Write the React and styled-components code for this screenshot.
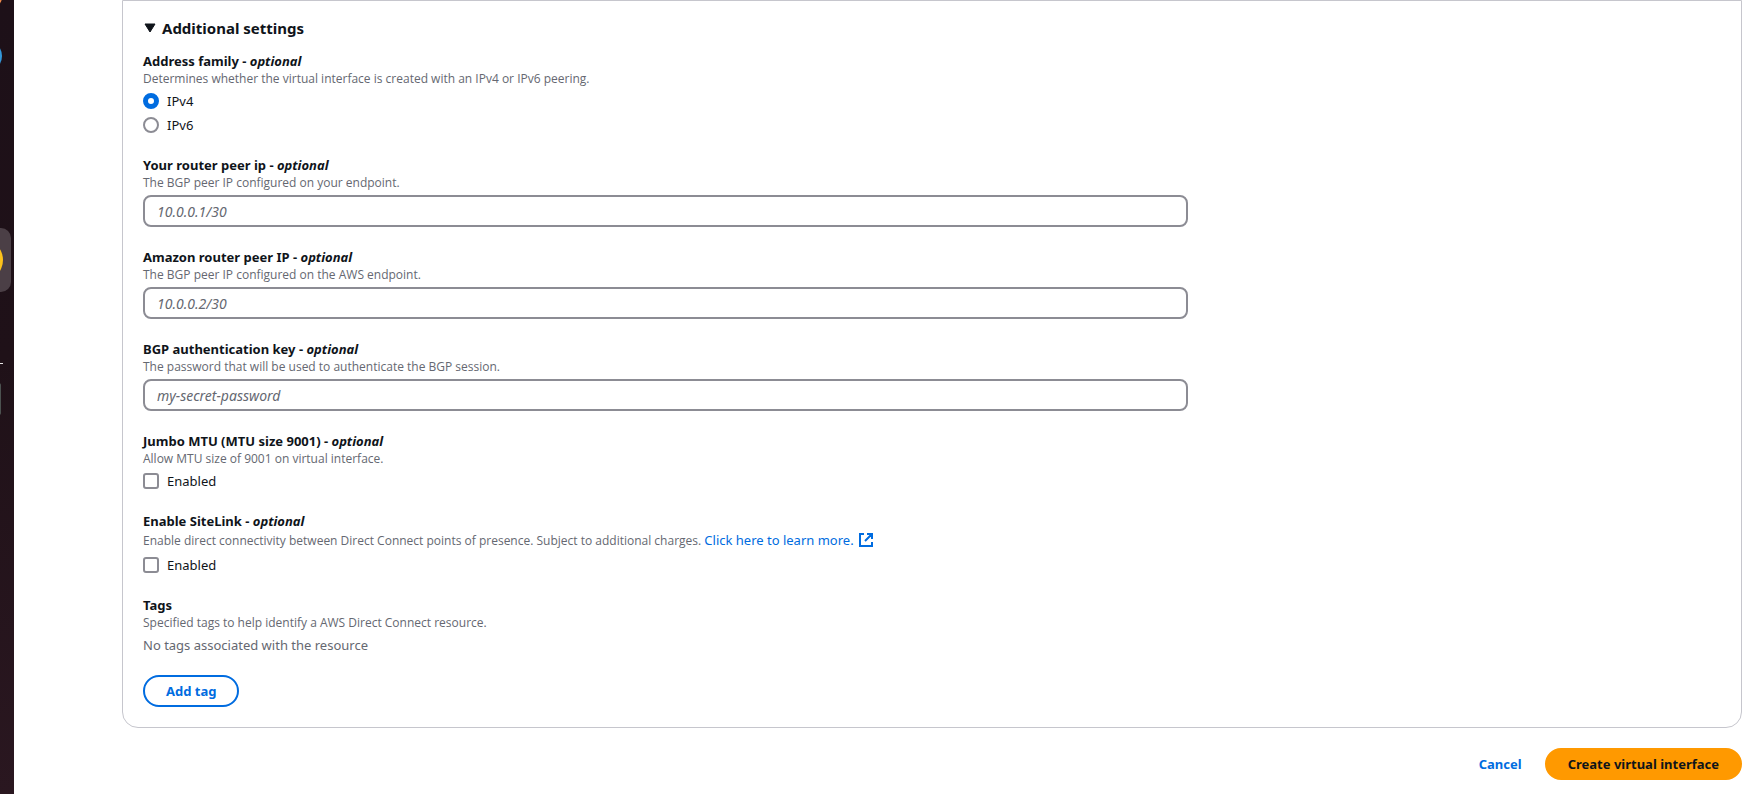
import React, { useState } from "react";
import styled, { createGlobalStyle } from "styled-components";

const GlobalStyle = createGlobalStyle`
  *, *::before, *::after { box-sizing: border-box; }
  body {
    margin: 0;
    background: #ffffff;
    color: #0f141a;
    font-family: "Noto Sans", "Open Sans", sans-serif;
    font-size: 13px;
    line-height: 20px;
  }
`;

const Screen = styled.div`
  display: flex;
  min-height: 100vh;
`;

const Dock = styled.aside`
  flex: 0 0 14px;
  overflow: hidden;
  background: linear-gradient(#1d1018, #1f1118 45%, #2a1720);

  svg { display: block; }
`;

const Main = styled.main`
  flex: 1;
  min-width: 0;
  padding: 0 20px 14px 108px;
`;

const Card = styled.section`
  padding: 16px 20px 20px;
  border: 1px solid #c6c6cd;
  border-radius: 0 0 16px 16px;
`;

const Toggle = styled.button`
  display: flex;
  align-items: center;
  gap: 6px;
  padding: 0 0 0 1px;
  border: 0;
  background: none;
  color: inherit;
  font: inherit;
  cursor: pointer;
`;

const SectionTitle = styled.h2`
  margin: 0 0 12px;
  font-size: 15px;
  font-weight: 700;
  line-height: 22px;
`;

const Fields = styled.div`
  display: grid;
  grid-template-columns: 2fr 1fr;
  column-gap: 10px;
  row-gap: 20px;

  > * { grid-column: 1; }
`;

const Field = styled.div`
  min-width: 0;
  margin: 0;
  padding: 0;
  border: 0;
`;

const Title = styled.label`
  display: block;
  margin: 0;
  padding: 0;
  font-size: 13px;
  font-weight: 700;
`;

const Hint = styled.p`
  margin: 0 0 4px;
  color: #656871;
  font-family: "Open Sans", "Noto Sans", sans-serif;
  font-size: 12px;
  line-height: ${(p) => (p.$tall ? 20 : 16)}px;
`;

const TextInput = styled.input`
  display: block;
  width: 100%;
  height: 32px;
  padding: 4px 12px;
  border: 2px solid #8c8c94;
  border-radius: 8px;
  background: #ffffff;
  color: inherit;
  font: inherit;
  font-size: 14px;

  &::placeholder {
    color: #656871;
    font-style: italic;
    opacity: 1;
  }
`;

const Options = styled.div`
  display: flex;
  flex-direction: column;
  align-items: flex-start;
  gap: 4px;
`;

const Option = styled.label`
  display: flex;
  align-items: center;
  gap: 8px;
`;

const Radio = styled.input.attrs({ type: "radio" })`
  appearance: none;
  width: 16px;
  height: 16px;
  margin: 0;
  border: 2px solid #8c8c94;
  border-radius: 50%;
  background: #ffffff;

  &:checked { border: 5px solid #006ce0; }
`;

const Checkbox = styled.input.attrs({ type: "checkbox" })`
  appearance: none;
  width: 16px;
  height: 16px;
  margin: 0;
  border: 2px solid #8c8c94;
  border-radius: 3px;
  background: #ffffff;

  &:checked { border-color: #006ce0; background: #006ce0; }
`;

const Link = styled.a`
  color: #006ce0;
  font-family: "Noto Sans", "Open Sans", sans-serif;
  font-size: 13px;
  line-height: 16px;
  text-decoration: none;

  svg {
    margin-left: 4px;
    vertical-align: -3px;
  }
`;

const Muted = styled.p`
  margin: 0;
  color: #656871;
`;

const Button = styled.button`
  height: 32px;
  padding: 0 21px;
  border: 2px solid ${(p) => p.$border || p.$fill || "transparent"};
  border-radius: 16px;
  background: ${(p) => p.$fill || "transparent"};
  color: ${(p) => (p.$fill ? "#0f141a" : "#006ce0")};
  font: inherit;
  font-weight: 700;
  cursor: pointer;
`;

const TagActions = styled.div`
  margin-top: 20px;
`;

const Footer = styled.footer`
  display: flex;
  justify-content: flex-end;
  margin-top: 20px;
`;

function OptionalTitle({ children, ...rest }) {
  return (
    <Title {...rest}>
      {children} - <em>optional</em>
    </Title>
  );
}

function TextField({ id, title, hint, placeholder, type = "text" }) {
  return (
    <Field>
      <OptionalTitle htmlFor={id}>{title}</OptionalTitle>
      <Hint id={`${id}-hint`}>{hint}</Hint>
      <TextInput id={id} type={type} placeholder={placeholder} aria-describedby={`${id}-hint`} />
    </Field>
  );
}

function ExternalIcon() {
  return (
    <svg width="16" height="16" viewBox="0 0 16 16" fill="none" stroke="currentColor" strokeWidth="2" aria-hidden="true">
      <path d="M9 2h5v5M7 9l7-7M14 10v4H2V2h4" />
    </svg>
  );
}

function DockIcons() {
  return (
    <svg width="14" height="420" aria-hidden="true">
      <circle cx="-9" cy="-3" r="11" fill="#f08a4b" />
      <circle cx="-14" cy="56" r="16" fill="#3498db" />
      <rect x="-52" y="228" width="63" height="64" rx="10" fill="#4b3f46" />
      <circle cx="-18" cy="260" r="21" fill="#fcc21b" />
      <rect x="0" y="363" width="3" height="1" fill="#e8e6e7" />
      <rect x="-30" y="383" width="31" height="32" rx="2" fill="#4c5250" />
    </svg>
  );
}

export default function App() {
  const [open, setOpen] = useState(true);
  const [family, setFamily] = useState("IPv4");

  return (
    <Screen>
      <GlobalStyle />
      <Dock>
        <DockIcons />
      </Dock>
      <Main>
        <Card>
          <SectionTitle>
            <Toggle type="button" aria-expanded={open} onClick={() => setOpen(!open)}>
              <svg width="12" height="12" viewBox="0 0 12 12" aria-hidden="true">
                <path d="M1 2h10L6 10z" fill="#0f141a" stroke="#0f141a" strokeLinejoin="round" />
              </svg>
              Additional settings
            </Toggle>
          </SectionTitle>
          {open && (
            <Fields>
              <Field as="fieldset">
                <OptionalTitle as="legend">Address family</OptionalTitle>
                <Hint>Determines whether the virtual interface is created with an IPv4 or IPv6 peering.</Hint>
                <Options>
                  {["IPv4", "IPv6"].map((name) => (
                    <Option key={name}>
                      <Radio name="family" checked={family === name} onChange={() => setFamily(name)} />
                      {name}
                    </Option>
                  ))}
                </Options>
              </Field>
              <TextField
                id="router-peer"
                title="Your router peer ip"
                hint="The BGP peer IP configured on your endpoint."
                placeholder="10.0.0.1/30"
              />
              <TextField
                id="amazon-peer"
                title="Amazon router peer IP"
                hint="The BGP peer IP configured on the AWS endpoint."
                placeholder="10.0.0.2/30"
              />
              <TextField
                id="bgp-key"
                title="BGP authentication key"
                hint="The password that will be used to authenticate the BGP session."
                placeholder="my-secret-password"
              />
              <Field as="fieldset">
                <OptionalTitle as="legend">Jumbo MTU (MTU size 9001)</OptionalTitle>
                <Hint>Allow MTU size of 9001 on virtual interface.</Hint>
                <Options>
                  <Option>
                    <Checkbox name="jumbo" />
                    Enabled
                  </Option>
                </Options>
              </Field>
              <Field as="fieldset">
                <OptionalTitle as="legend">Enable SiteLink</OptionalTitle>
                <Hint $tall>
                  Enable direct connectivity between Direct Connect points of presence. Subject to additional charges.{" "}
                  <Link href="#sitelink">
                    Click here to learn more.
                    <ExternalIcon />
                  </Link>
                </Hint>
                <Options>
                  <Option>
                    <Checkbox name="sitelink" />
                    Enabled
                  </Option>
                </Options>
              </Field>
              <Field>
                <Title as="h3">Tags</Title>
                <Hint>Specified tags to help identify a AWS Direct Connect resource.</Hint>
                <Muted>No tags associated with the resource</Muted>
                <TagActions>
                  <Button type="button" $border="#006ce0">Add tag</Button>
                </TagActions>
              </Field>
            </Fields>
          )}
        </Card>
        <Footer>
          <Button type="button">Cancel</Button>
          <Button type="submit" $fill="#ff9900">Create virtual interface</Button>
        </Footer>
      </Main>
    </Screen>
  );
}
